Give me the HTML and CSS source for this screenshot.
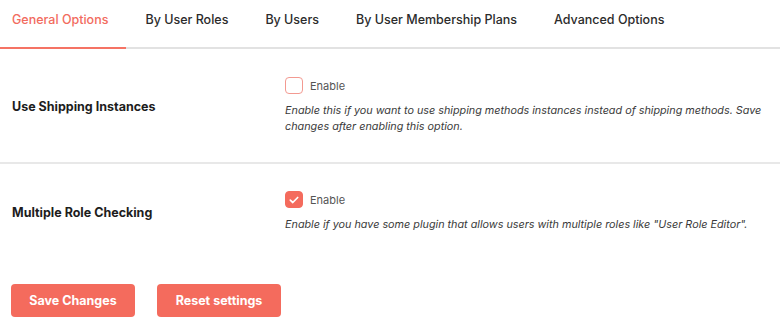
FILE: index.html
```html
<!DOCTYPE html>
<html lang="en">
<head>
  <meta charset="UTF-8" />
  <title>Settings</title>
  <link rel="stylesheet" href="styles.css">
</head>
<body>
<div class="settings">
  <nav class="tabs">
    <a class="tab active" href="#">General Options</a>
    <a class="tab" href="#">By User Roles</a>
    <a class="tab" href="#">By Users</a>
    <a class="tab" href="#">By User Membership Plans</a>
    <a class="tab" href="#">Advanced Options</a>
  </nav>

  <div class="row">
    <div class="label">Use Shipping Instances</div>
    <div class="field">
      <label class="check">
        <span class="box"></span>
        Enable
      </label>
      <p class="desc">Enable this if you want to use shipping methods instances instead of shipping methods. Save changes after enabling this option.</p>
    </div>
  </div>

  <div class="row last">
    <div class="label">Multiple Role Checking</div>
    <div class="field">
      <label class="check">
        <span class="box checked">
          <svg width="10" height="8" viewBox="0 0 10 8"><path d="M1.3 4.2 3.8 6.5 8.7 1.5" fill="none" stroke="#fff" stroke-width="1.7" stroke-linecap="round" stroke-linejoin="round"/></svg>
        </span>
        Enable
      </label>
      <p class="desc">Enable if you have some plugin that allows users with multiple roles like "User Role Editor".</p>
    </div>
  </div>

  <div class="actions">
    <button class="btn">Save Changes</button>
    <button class="btn">Reset settings</button>
  </div>
</div>
</body>
</html>
```

FILE: styles.css
```css
body {
  margin: 0;
  background: #fff;
  font-family: Inter, "Noto Sans", sans-serif;
  color: #222;
}
.tabs {
  display: flex;
  gap: 7px;
  height: 47px;
  border-bottom: 2px solid #e2e2e2;
}
.tab {
  display: block;
  padding: 12px 18px 0 12px;
  margin-bottom: -2px;
  font-size: 12.5px;
  font-weight: 500;
  line-height: 16px;
  color: #2b2b2b;
  text-decoration: none;
  border-bottom: 2px solid transparent;
}
.tab.active {
  color: #f26b5e;
  border-bottom-color: #f57364;
}
.row {
  display: flex;
  align-items: center;
  padding: 28px 0 27px;
  border-bottom: 2px solid #e8e8e8;
}
.row.last {
  border-bottom: none;
  padding: 27px 0 28px;
}
.label {
  width: 273px;
  padding-left: 12px;
  font-size: 12.5px;
  font-weight: 700;
  color: #1d1d1d;
}
.field {
  flex: 1;
  padding-right: 16px;
}
.check {
  display: flex;
  align-items: center;
  gap: 7px;
  font-size: 11px;
  color: #555;
  height: 17px;
}
.box {
  width: 16px;
  height: 15px;
  border: 1px solid #f39a91;
  border-radius: 4px;
  display: flex;
  align-items: center;
  justify-content: center;
}
.box.checked {
  background: #f46b5d;
  border-color: #f46b5d;
}
.desc {
  margin: 9px 0 0;
  font-size: 10.8px;
  line-height: 16px;
  font-style: italic;
  color: #3a3a3a;
}
.actions {
  display: flex;
  gap: 22px;
  padding: 23px 11px;
}
.btn {
  width: 124px;
  height: 33px;
  border: none;
  border-radius: 4px;
  background: #f46b5d;
  color: #fff;
  font-family: inherit;
  font-size: 12.5px;
  font-weight: 700;
  cursor: pointer;
}
```
